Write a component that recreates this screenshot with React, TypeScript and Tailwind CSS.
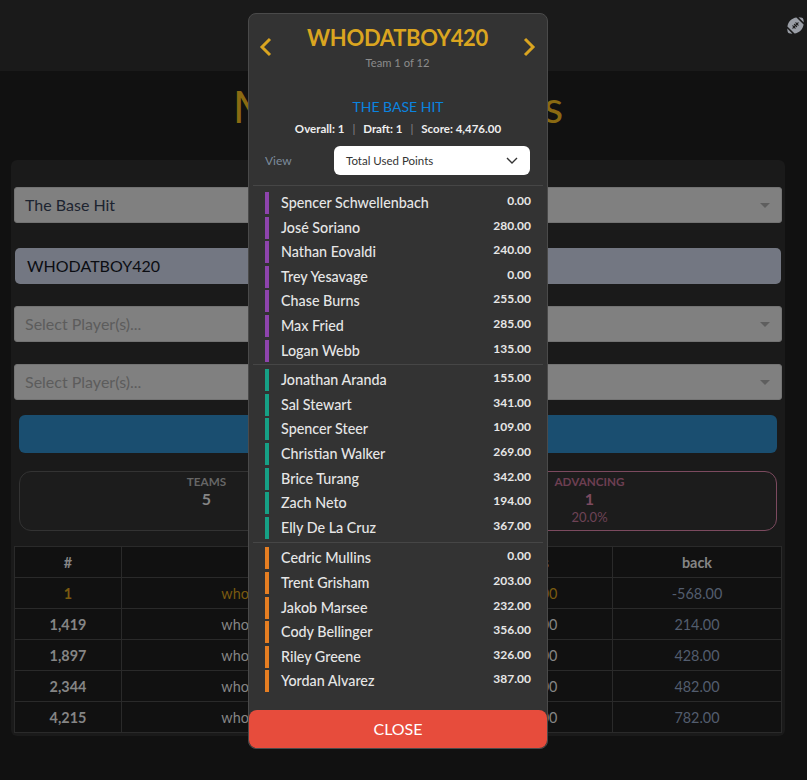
import { FaFootballBall } from 'react-icons/fa';

const sections = [
  {
    bar: 'bg-[#8e44ad]',
    pad: 'pt-[6px]',
    players: [
      ['Spencer Schwellenbach', '0.00'],
      ['José Soriano', '280.00'],
      ['Nathan Eovaldi', '240.00'],
      ['Trey Yesavage', '0.00'],
      ['Chase Burns', '255.00'],
      ['Max Fried', '285.00'],
      ['Logan Webb', '135.00'],
    ],
  },
  {
    bar: 'bg-[#16a085]',
    pad: 'pt-[4px] pb-[1px]',
    players: [
      ['Jonathan Aranda', '155.00'],
      ['Sal Stewart', '341.00'],
      ['Spencer Steer', '109.00'],
      ['Christian Walker', '269.00'],
      ['Brice Turang', '342.00'],
      ['Zach Neto', '194.00'],
      ['Elly De La Cruz', '367.00'],
    ],
  },
  {
    bar: 'bg-[#e67e22]',
    pad: 'pt-[4px]',
    players: [
      ['Cedric Mullins', '0.00'],
      ['Trent Grisham', '203.00'],
      ['Jakob Marsee', '232.00'],
      ['Cody Bellinger', '356.00'],
      ['Riley Greene', '326.00'],
      ['Yordan Alvarez', '387.00'],
    ],
  },
];

const entries = [
  ['1', 'whodatboy420 (#1)', '5,044.00', '-568.00'],
  ['1,419', 'whodatboy420 (#2)', '4,262.00', '214.00'],
  ['1,897', 'whodatboy420 (#3)', '4,048.00', '428.00'],
  ['2,344', 'whodatboy420 (#4)', '3,994.00', '482.00'],
  ['4,215', 'whodatboy420 (#5)', '3,694.00', '782.00'],
];

function FakeSelect({ label, placeholder }: { label: string; placeholder?: boolean }) {
  return (
    <div className="h-9 mx-[3px] flex items-center justify-between pl-[10px] pr-[11px] bg-[#808080] border border-[#737373] rounded-[3px]">
      <span className={placeholder ? 'text-[#5c5c5c]' : 'text-[#1d2430]'}>{label}</span>
      <span className="w-0 h-0 border-x-[5px] border-x-transparent border-t-[5px] border-t-[#5e5e5e]" />
    </div>
  );
}

function Chevron({ points }: { points: string }) {
  return (
    <svg width="14" height="20" viewBox="0 0 14 20" fill="none" stroke="#daa520" strokeWidth="3">
      <polyline points={points} />
    </svg>
  );
}

export default function App() {
  return (
    <div className="relative min-h-[780px] bg-[#111111] font-['Lato',sans-serif] overflow-hidden">
      <header className="h-[71px] bg-[#1a1a1a] flex justify-end pt-[17px] pr-[3px]">
        <FaFootballBall className="w-[17px] h-[17px] text-[#9a9ea6]" />
      </header>

      <h1 className="text-center text-[45px] leading-[48px] mt-[11px] mr-[11px] text-[#8a6a12]">My Tournaments</h1>

      <main className="mt-[30px] ml-[11px] mr-[22px] h-[576px] bg-[#1a1a1a] rounded-md pt-[27px]">
        <FakeSelect label="The Base Hit" />
        <div className="h-9 mt-[25px] mx-[4px] px-3 flex items-center bg-[#737782] rounded-[5px] text-[#0b0d12]">WHODATBOY420</div>
        <div className="mt-[22px]">
          <FakeSelect label="Select Player(s)..." placeholder />
        </div>
        <div className="mt-[22px]">
          <FakeSelect label="Select Player(s)..." placeholder />
        </div>
        <div className="h-[38px] mt-[15px] mx-2 rounded-md bg-[#1a4e70]" />

        <div className="grid grid-cols-2 gap-2 mx-2 mt-[18px] h-[60px] text-center">
          <div className="rounded-xl border border-[#333333] bg-[#1c1c1c] pt-[2px]">
            <div className="text-[11.7px] font-bold leading-[15px] text-[#666666]">TEAMS</div>
            <div className="font-bold leading-5 text-[#858585]">5</div>
          </div>
          <div className="rounded-xl border border-[#7c4a5f] bg-[#1c1c1c] pt-[2px]">
            <div className="text-[11.7px] font-bold leading-[15px] text-[#6d3f52]">ADVANCING</div>
            <div className="font-bold leading-5 text-[#7c4a5f]">1</div>
            <div className="text-[13px] leading-4 text-[#6e4356]">20.0%</div>
          </div>
        </div>

        <table className="mt-[15px] mx-[3px] w-[768px] table-fixed border-collapse text-center text-[14.4px] bg-[#111111]">
          <thead>
            <tr className="h-[31px] text-[#858585] font-bold">
              <th className="w-[107px] pt-[2px] border border-[#2a2a2a]">#</th>
              <th className="w-[324px] pt-[2px] border border-[#2a2a2a]">entry</th>
              <th className="w-[167px] pt-[2px] border border-[#2a2a2a]">points</th>
              <th className="pt-[2px] border border-[#2a2a2a]">back</th>
            </tr>
          </thead>
          <tbody>
            {entries.map((row, i) => (
              <tr key={row[0]} className={`h-[31px] ${i === 0 ? 'text-[#7a5a10]' : 'text-[#858585]'}`}>
                <td className="pt-[2px] border border-[#2a2a2a] font-bold">{row[0]}</td>
                <td className="pt-[2px] border border-[#2a2a2a]">{row[1]}</td>
                <td className="pt-[2px] border border-[#2a2a2a]">{row[2]}</td>
                <td className="pt-[2px] border border-[#2a2a2a] text-[#535d6e]">{row[3]}</td>
              </tr>
            ))}
          </tbody>
        </table>
      </main>

      {/* team detail modal */}
      <div className="absolute left-[248px] top-[13px] w-[300px] h-[736px] flex flex-col bg-[#333333] border border-[#4a4a4a] rounded-lg">
        <div className="flex items-start justify-between pl-[10px] pr-[11px] pt-[10px]">
          <div className="pt-[13px]">
            <Chevron points="11,2 3,10 11,18" />
          </div>
          <div className="text-center">
            <div className="text-[22px] leading-[28px] font-bold tracking-[-0.33px] text-[#daa520]">WHODATBOY420</div>
            <div className="text-[11.2px] leading-[14px] mt-[4px] text-[#8c8c8c]">Team 1 of 12</div>
          </div>
          <div className="pt-[13px]">
            <Chevron points="3,2 11,10 3,18" />
          </div>
        </div>

        <div className="mt-[28px] text-center text-sm leading-[18px] text-[#0a84e0]">THE BASE HIT</div>
        <div className="mt-[6px] flex justify-center gap-2 text-[11.5px] leading-[14px] font-bold text-[#eeeeee]">
          <span>Overall: 1</span>
          <span className="font-normal text-[#888888]">|</span>
          <span>Draft: 1</span>
          <span className="font-normal text-[#888888]">|</span>
          <span>Score: 4,476.00</span>
        </div>

        <div className="mt-[10px] flex items-center justify-between pl-4 pr-[17px]">
          <span className="text-xs text-[#7d8b9c]">View</span>
          <div className="w-[196px] h-[29px] px-3 flex items-center justify-between bg-white rounded-md text-[11.5px] text-[#333333]">
            Total Used Points
            <svg width="12" height="8" viewBox="0 0 12 8" fill="none" stroke="#333333" strokeWidth="1.4">
              <polyline points="1,1 6,6 11,1" />
            </svg>
          </div>
        </div>

        <div className="mt-[10px]">
          {sections.map((section, i) => (
            <div key={i} className={`mx-1 border-t border-[#464646] ${section.pad}`}>
              {section.players.map(([name, pts]) => (
                <div key={name} className="h-[24.6px] flex items-start pl-3 pr-[12px]">
                  <span className={`w-1 h-[22px] ${section.bar}`} />
                  <span className="ml-3 flex-1 text-[14.3px] leading-[22px] font-medium text-[#e6e6e6]">{name}</span>
                  <span className="text-xs leading-[18px] font-bold text-[#e6e6e6]">{pts}</span>
                </div>
              ))}
            </div>
          ))}
        </div>

        <button className="mt-auto h-[38px] rounded-lg bg-[#e74c3c] text-white text-base">CLOSE</button>
      </div>
    </div>
  );
}
